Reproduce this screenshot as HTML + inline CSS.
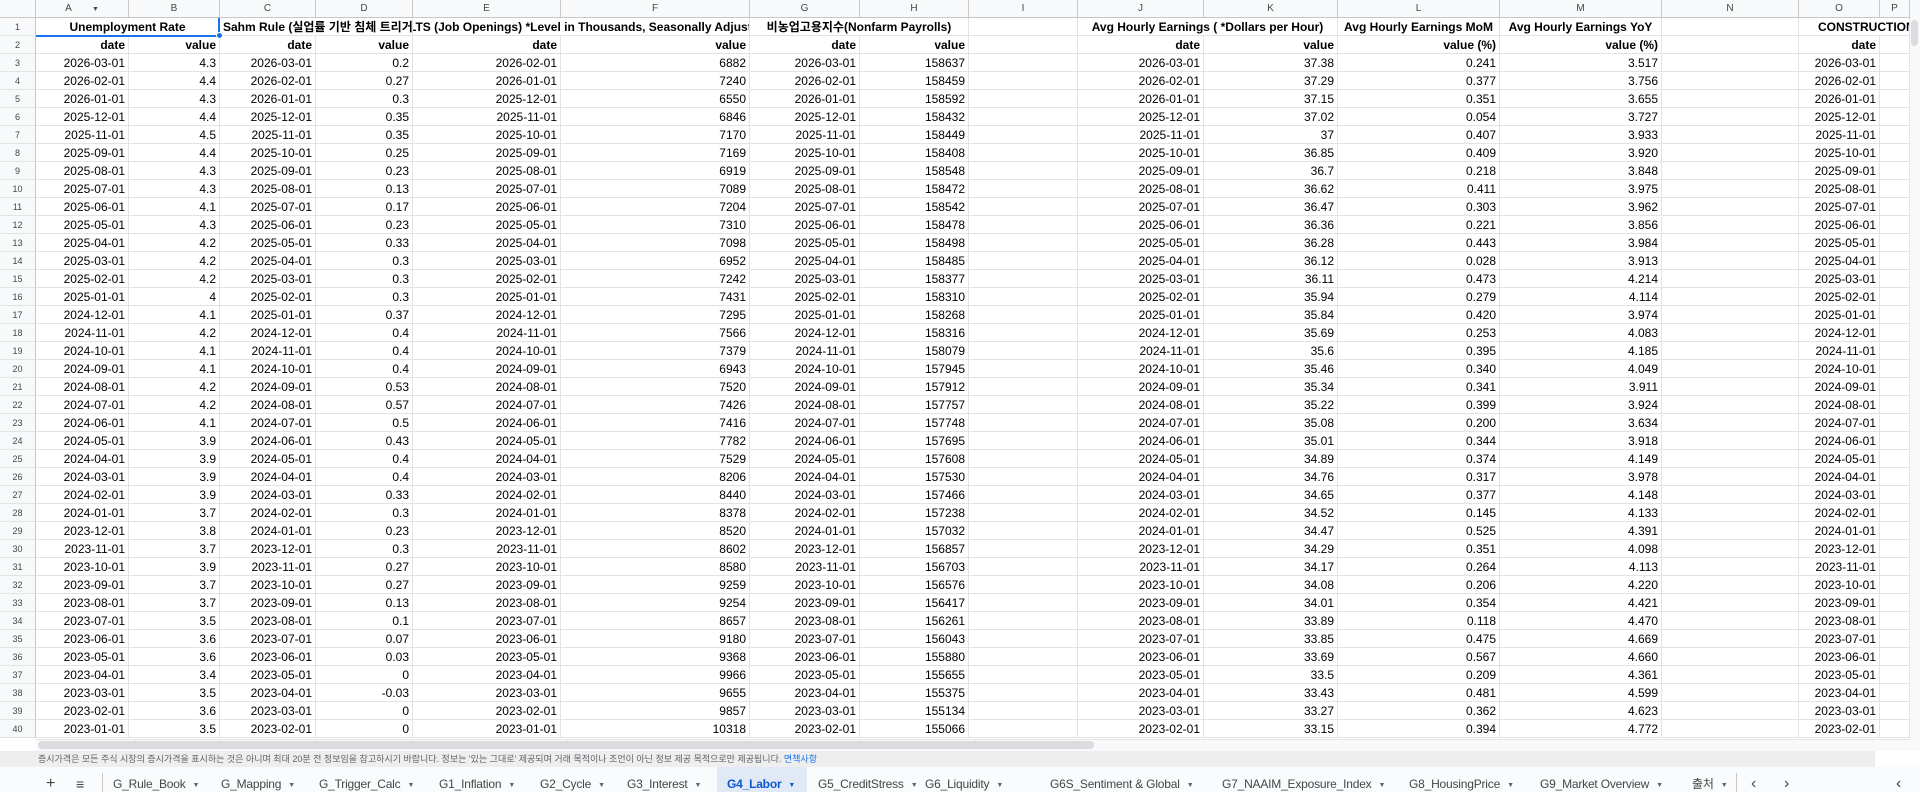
<!DOCTYPE html>
<html><head><meta charset="utf-8">
<style>
*{margin:0;padding:0;box-sizing:border-box}
body{width:1920px;height:792px;overflow:hidden;background:#fff;font-family:"Liberation Sans","Noto Sans CJK KR",sans-serif;position:relative}
.c{position:absolute;height:18px;line-height:18px;font-size:12px;color:#000;white-space:nowrap;overflow:hidden;padding:0 3px;text-align:right;border-right:1px solid #e2e3e3;border-bottom:1px solid #e2e3e3}
.h{position:absolute;top:0;height:18px;line-height:18px;font-size:10px;color:#444746;text-align:center;background:#f8f9fa;border-right:1px solid #c7c7c7;border-bottom:1px solid #c7c7c7}
.r{position:absolute;left:0;width:36px;height:18px;line-height:18px;font-size:9px;color:#444746;text-align:center;background:#f8f9fa;border-right:1px solid #c7c7c7;border-bottom:1px solid #e2e3e3}
.b{font-weight:bold;text-align:center}
.tab{position:absolute;top:767px;height:25px;line-height:34px;font-size:12px;color:#444746;white-space:nowrap;letter-spacing:-0.2px}
.tab i{font-style:normal;font-size:7px;margin-left:7px;color:#5f6368;vertical-align:1px}
</style></head><body>
<div id="g"></div>
<div style="position:absolute;left:36px;top:739px;width:1874px;height:12px;background:#f8f9fa;border-top:1px solid #e2e3e3"></div>
<div style="position:absolute;left:38px;top:741px;width:1056px;height:8px;background:#dadce0;border-radius:4px"></div>
<div style="position:absolute;left:1910px;top:0;width:10px;height:751px;background:#f8f9fa"></div>
<div style="position:absolute;left:1911px;top:20px;width:7px;height:26px;background:#dadce0;border-radius:4px"></div>
<div style="position:absolute;left:0;top:751px;width:1875px;height:16px;background:#eeeeee;font-size:9px;line-height:16px;color:#5f6368;padding-left:38px;white-space:nowrap">증시가격은 모든 주식 시장의 증시가격을 표시하는 것은 아니며 최대 20분 전 정보임을 참고하시기 바랍니다. 정보는 '있는 그대로' 제공되며 거래 목적이나 조언이 아닌 정보 제공 목적으로만 제공됩니다. <span style="color:#1a73e8">면책사항</span></div>
<div style="position:absolute;left:0;top:767px;width:1920px;height:25px;background:#f9fbfd"></div>
<div style="position:absolute;left:717px;top:767px;width:90px;height:25px;background:#e1e9f7"></div>
<div class="tab" style="left:46px;font-size:16px">+</div>
<div class="tab" style="left:76px;font-size:14px">≡</div>
<div style="position:absolute;left:102px;top:773px;width:1px;height:19px;background:#c7c7c7"></div>
<div id="tabs"></div>
<script>
const cols=[36,129,220,316,413,561,750,860,969,1078,1204,1338,1500,1662,1799,1880,1910];
const L="ABCDEFGHIJKLMNOP";
let h='';
h+='<div class="h" style="left:0;width:36px"></div>';
for(let i=0;i<16;i++){h+=`<div class="h" style="left:${cols[i]}px;width:${cols[i+1]-cols[i]}px">${L[i]}${i==0?' <span style="margin-left:18px;font-size:7px">▼</span>':''}</div>`}
function mon(y,m,n){let a=[];for(let k=0;k<n;k++){a.push(y+'-'+String(m).padStart(2,'0')+'-01');m--;if(m==0){m=12;y--;}}return a}
const A="2026-03-01,2026-02-01,2026-01-01,2025-12-01,2025-11-01,2025-09-01,2025-08-01,2025-07-01,2025-06-01,2025-05-01,2025-04-01,2025-03-01,2025-02-01,2025-01-01,2024-12-01,2024-11-01,2024-10-01,2024-09-01,2024-08-01,2024-07-01,2024-06-01,2024-05-01,2024-04-01,2024-03-01,2024-02-01,2024-01-01,2023-12-01,2023-11-01,2023-10-01,2023-09-01,2023-08-01,2023-07-01,2023-06-01,2023-05-01,2023-04-01,2023-03-01,2023-02-01,2023-01-01".split(',');
const B="4.3,4.4,4.3,4.4,4.5,4.4,4.3,4.3,4.1,4.3,4.2,4.2,4.2,4,4.1,4.2,4.1,4.1,4.2,4.2,4.1,3.9,3.9,3.9,3.9,3.7,3.8,3.7,3.9,3.7,3.7,3.5,3.6,3.6,3.4,3.5,3.6,3.5".split(',');
const C=mon(2026,3,38);
const D="0.2,0.27,0.3,0.35,0.35,0.25,0.23,0.13,0.17,0.23,0.33,0.3,0.3,0.3,0.37,0.4,0.4,0.4,0.53,0.57,0.5,0.43,0.4,0.4,0.33,0.3,0.23,0.3,0.27,0.27,0.13,0.1,0.07,0.03,0,-0.03,0,0".split(',');
const E=mon(2026,2,38);
const F="6882,7240,6550,6846,7170,7169,6919,7089,7204,7310,7098,6952,7242,7431,7295,7566,7379,6943,7520,7426,7416,7782,7529,8206,8440,8378,8520,8602,8580,9259,9254,8657,9180,9368,9966,9655,9857,10318".split(',');
const H="158637,158459,158592,158432,158449,158408,158548,158472,158542,158478,158498,158485,158377,158310,158268,158316,158079,157945,157912,157757,157748,157695,157608,157530,157466,157238,157032,156857,156703,156576,156417,156261,156043,155880,155655,155375,155134,155066".split(',');
const K="37.38,37.29,37.15,37.02,37,36.85,36.7,36.62,36.47,36.36,36.28,36.12,36.11,35.94,35.84,35.69,35.6,35.46,35.34,35.22,35.08,35.01,34.89,34.76,34.65,34.52,34.47,34.29,34.17,34.08,34.01,33.89,33.85,33.69,33.5,33.43,33.27,33.15".split(',');
const Lc="0.241,0.377,0.351,0.054,0.407,0.409,0.218,0.411,0.303,0.221,0.443,0.028,0.473,0.279,0.420,0.253,0.395,0.340,0.341,0.399,0.200,0.344,0.374,0.317,0.377,0.145,0.525,0.351,0.264,0.206,0.354,0.118,0.475,0.567,0.209,0.481,0.362,0.394".split(',');
const M="3.517,3.756,3.655,3.727,3.933,3.920,3.848,3.975,3.962,3.856,3.984,3.913,4.214,4.114,3.974,4.083,4.185,4.049,3.911,3.924,3.634,3.918,4.149,3.978,4.148,4.133,4.391,4.098,4.113,4.220,4.421,4.470,4.669,4.660,4.361,4.599,4.623,4.772".split(',');
const data=[A,B,C,D,E,F,C,H,null,C,K,Lc,M,null,C,null];
const r2=['date','value','date','value','date','value','date','value','','date','value','value (%)','value (%)','','date',''];
for(let r=1;r<=40;r++){
 const top=18+(r-1)*18;
 h+=`<div class="r" style="top:${top}px">${r}</div>`;
 for(let i=0;i<16;i++){
  let t='';
  if(r==2)t=r2[i];else if(r>2&&data[i])t=data[i][r-3];
  if(r==1)t='';
  h+=`<div class="c" style="left:${cols[i]}px;top:${top}px;width:${cols[i+1]-cols[i]}px;${r==2?'font-weight:bold':''}">${t}</div>`;
 }
}
function hdr(l,w,t,al){return `<div class="c b" style="left:${l}px;top:18px;width:${w}px;background:#fff;text-align:${al||'center'}">${t}</div>`}
h+=hdr(36,184,'Unemployment Rate');
h+=hdr(220,193,'Sahm Rule (실업률 기반 침체 트리거)','left');
h+=`<div class="c b" style="left:413px;top:18px;width:337px;background:#fff;text-align:left;padding-left:0"><span style="position:relative;left:-4px">LTS (Job Openings) *Level in Thousands, Seasonally Adjusted</span></div>`;
h+=hdr(750,219,'비농업고용지수(Nonfarm Payrolls)');
h+=hdr(1078,260,'Avg Hourly Earnings ( *Dollars per Hour)');
h+=hdr(1338,162,'Avg Hourly Earnings MoM');
h+=hdr(1500,162,'Avg Hourly Earnings YoY');
h+=`<div class="c b" style="left:1799px;top:18px;width:111px;background:#fff;text-align:left;padding-left:19px">CONSTRUCTION</div>`;
h+='<div style="position:absolute;left:36px;top:35px;width:184px;height:2px;background:#1a73e8"></div>';
h+='<div style="position:absolute;left:218px;top:18px;width:2px;height:19px;background:#1a73e8"></div>';
h+='<div style="position:absolute;left:216px;top:32px;width:7px;height:7px;border-radius:50%;background:#1a73e8;border:1px solid #fff"></div>';
document.getElementById('g').innerHTML=h;
const tabs=[[113,'G_Rule_Book'],[221,'G_Mapping'],[319,'G_Trigger_Calc'],[439,'G1_Inflation'],[540,'G2_Cycle'],[627,'G3_Interest'],[727,'G4_Labor'],[818,'G5_CreditStress'],[925,'G6_Liquidity'],[1050,'G6S_Sentiment &amp; Global'],[1222,'G7_NAAIM_Exposure_Index'],[1409,'G8_HousingPrice'],[1540,'G9_Market Overview'],[1692,'출처']];
let t='';
tabs.forEach(([x,n])=>{const a=n=='G4_Labor';t+=`<div class="tab" style="left:${x}px;${a?'color:#0b57d0;font-weight:bold':''}">${n}<i ${a?'style="color:#0b57d0"':''}>▼</i></div>`});
t+='<div style="position:absolute;left:1736px;top:773px;width:1px;height:19px;background:#c7c7c7"></div>';
t+='<div class="tab" style="left:1751px;font-size:16px">‹</div><div class="tab" style="left:1784px;font-size:16px">›</div><div class="tab" style="left:1896px;font-size:16px">‹</div>';
document.getElementById('tabs').innerHTML=t;
</script>
</body></html>
